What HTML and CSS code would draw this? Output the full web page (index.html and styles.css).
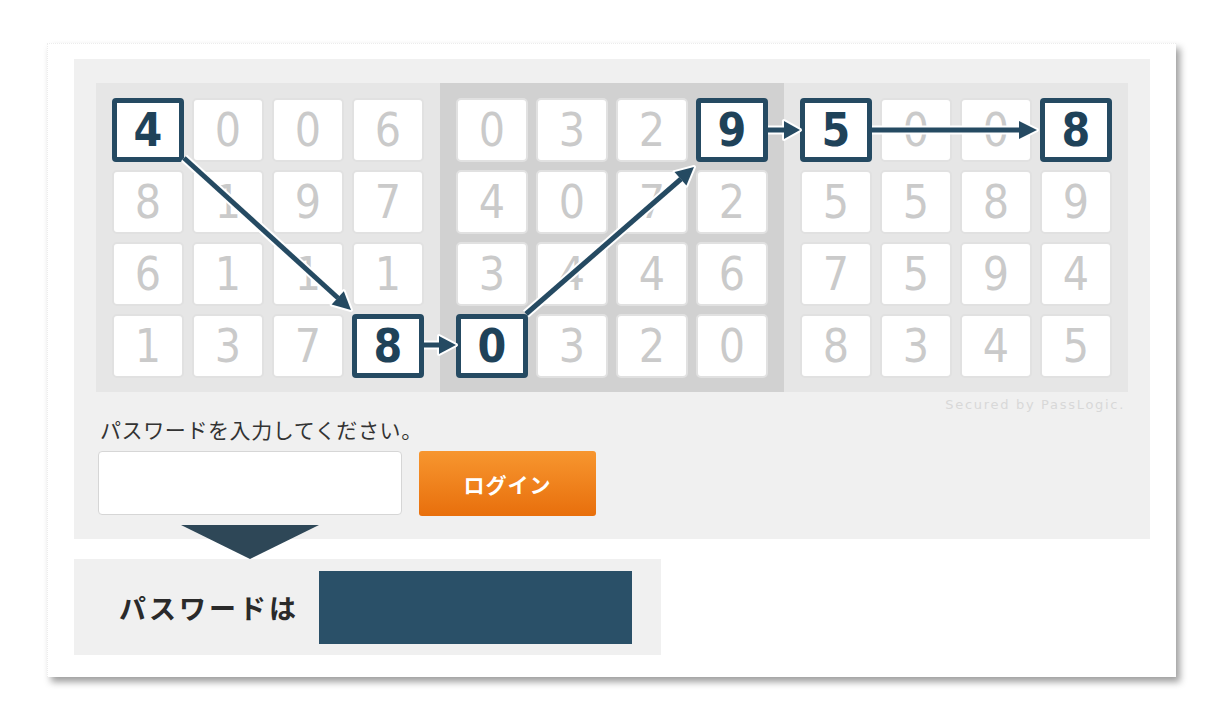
FILE: index.html
```html
<!DOCTYPE html>
<html lang="ja">
<head>
    <meta charset="UTF-8">
    <meta name="viewport" content="width=device-width, initial-scale=1.0">
    <title>PassLogic ログイン</title>
    <link rel="stylesheet" href="styles.css">
</head>
<body>
    <div class="card">
        <div class="panel">
            <div class="keypad">
                <div class="block">
                    <div class="cell on">4</div><div class="cell">0</div><div class="cell">0</div><div class="cell">6</div>
                    <div class="cell">8</div><div class="cell">1</div><div class="cell">9</div><div class="cell">7</div>
                    <div class="cell">6</div><div class="cell">1</div><div class="cell">1</div><div class="cell">1</div>
                    <div class="cell">1</div><div class="cell">3</div><div class="cell">7</div><div class="cell on">8</div>
                </div>
                <div class="block mid">
                    <div class="cell">0</div><div class="cell">3</div><div class="cell">2</div><div class="cell on">9</div>
                    <div class="cell">4</div><div class="cell">0</div><div class="cell">7</div><div class="cell">2</div>
                    <div class="cell">3</div><div class="cell">4</div><div class="cell">4</div><div class="cell">6</div>
                    <div class="cell on">0</div><div class="cell">3</div><div class="cell">2</div><div class="cell">0</div>
                </div>
                <div class="block">
                    <div class="cell on">5</div><div class="cell">0</div><div class="cell">0</div><div class="cell on">8</div>
                    <div class="cell">5</div><div class="cell">5</div><div class="cell">8</div><div class="cell">9</div>
                    <div class="cell">7</div><div class="cell">5</div><div class="cell">9</div><div class="cell">4</div>
                    <div class="cell">8</div><div class="cell">3</div><div class="cell">4</div><div class="cell">5</div>
                </div>

                <!-- 入力順の矢印 -->
                <svg class="arrows" width="1032" height="309" viewBox="0 0 1032 309">
                    <g class="halo">
                        <line x1="88" y1="75" x2="242" y2="215"/>
                        <polygon points="255,227 235.6,221.5 247.8,208.2"/>
                        <line x1="328" y1="262" x2="344" y2="262"/>
                        <polygon points="360,262 343,253 343,271"/>
                        <line x1="430" y1="231" x2="585" y2="96"/>
                        <polygon points="598,84 590.4,102.6 578.5,89.1"/>
                        <line x1="672" y1="47" x2="689" y2="47"/>
                        <polygon points="704,47 688,38 688,56"/>
                        <line x1="776" y1="47" x2="924" y2="47"/>
                        <polygon points="941,47 923,38 923,56"/>
                    </g>
                    <g class="ink">
                        <line x1="88" y1="75" x2="242" y2="215"/>
                        <polygon points="255,227 235.6,221.5 247.8,208.2"/>
                        <line x1="328" y1="262" x2="344" y2="262"/>
                        <polygon points="360,262 343,253 343,271"/>
                        <line x1="430" y1="231" x2="585" y2="96"/>
                        <polygon points="598,84 590.4,102.6 578.5,89.1"/>
                        <line x1="672" y1="47" x2="689" y2="47"/>
                        <polygon points="704,47 688,38 688,56"/>
                        <line x1="776" y1="47" x2="924" y2="47"/>
                        <polygon points="941,47 923,38 923,56"/>
                    </g>
                </svg>
            </div>

            <p class="credit">Secured by PassLogic.</p>
            <p class="prompt">パスワードを入力してください。</p>
            <div class="login-row">
                <input class="pw" type="password" aria-label="パスワード">
                <button class="login">ログイン</button>
            </div>
        </div>

        <div class="pointer"></div>

        <div class="result">
            <span class="result-label">パスワードは</span>
            <div class="answer"></div>
        </div>
    </div>
</body>
</html>
```

FILE: styles.css
```css
* {
    margin: 0;
    padding: 0;
    box-sizing: border-box;
}

body {
    background: #fff;
    font-family: 'Noto Sans CJK JP', 'Liberation Sans', sans-serif;
    color: #333;
    padding-bottom: 44px;
}

.card {
    width: 1129px;
    margin: 43px 0 0 47px;
    padding: 15px 26px 22px;
    background: #fff;
    border-top: 1px dotted #ececec;
    border-left: 1px dotted #ececec;
    box-shadow: 4px 5px 7px rgba(0, 0, 0, 0.38);
}

.panel {
    background: #f0f0f0;
    padding: 24px 22px 23px;
}

/* テンキー */
.keypad {
    position: relative;
    display: flex;
    width: 1032px;
    background: #e6e6e6;
}

.block {
    display: grid;
    grid-template-columns: repeat(4, 72px);
    grid-auto-rows: 64px;
    gap: 8px;
    padding: 15px 16px 14px;
    width: 344px;
}

.block.mid {
    background: #d1d1d1;
}

.cell {
    display: flex;
    align-items: center;
    justify-content: center;
    background: #fff;
    border: 2px solid #e1e1e1;
    border-radius: 5px;
    font-family: 'DejaVu Sans Condensed', 'Roboto', sans-serif;
    font-size: 46px;
    color: #cacaca;
    line-height: 1;
}

.cell.on {
    border: 5px solid #254a62;
    border-radius: 4px;
    color: #1f4259;
    font-weight: bold;
}

.arrows {
    position: absolute;
    left: 0;
    top: 0;
    pointer-events: none;
}

.arrows .halo line {
    stroke: #fff;
    stroke-width: 9;
}

.arrows .halo polygon {
    fill: #fff;
    stroke: #fff;
    stroke-width: 4;
    stroke-linejoin: round;
}

.arrows .ink line {
    stroke: #254a62;
    stroke-width: 5;
}

.arrows .ink polygon {
    fill: #254a62;
}

.credit {
    text-align: right;
    padding-right: 3px;
    margin-top: 5px;
    font-family: 'DejaVu Sans', sans-serif;
    font-size: 13px;
    letter-spacing: 1.7px;
    color: #d8d8d8;
    line-height: 16px;
}

.prompt {
    margin-top: 2px;
    padding-left: 4px;
    font-size: 21px;
    letter-spacing: 0.6px;
    line-height: 28px;
    color: #333;
}

.login-row {
    display: flex;
    gap: 17px;
    margin-top: 8px;
    padding-left: 2px;
}

.pw {
    width: 304px;
    height: 64px;
    background: #fff;
    border: 1px solid #d6d6d6;
    border-radius: 4px;
}

.login {
    width: 177px;
    height: 65px;
    border: none;
    border-radius: 3px;
    background: linear-gradient(#f7962f, #e86f0c);
    color: #fff;
    font-family: 'Noto Sans CJK JP', sans-serif;
    font-size: 21px;
    font-weight: bold;
    letter-spacing: 1px;
}

/* 結果表示 */
.pointer {
    width: 0;
    height: 0;
    margin: -14px 0 0 107px;
    border-left: 69px solid transparent;
    border-right: 69px solid transparent;
    border-top: 34px solid #2e4757;
}

.result {
    display: flex;
    align-items: center;
    gap: 20px;
    width: 587px;
    height: 96px;
    padding-left: 45px;
    background: #f0f0f0;
}

.result-label {
    font-size: 27px;
    font-weight: bold;
    letter-spacing: 3px;
    color: #2a2a2a;
}

.answer {
    width: 313px;
    height: 73px;
    background: #2a5068;
}
```
